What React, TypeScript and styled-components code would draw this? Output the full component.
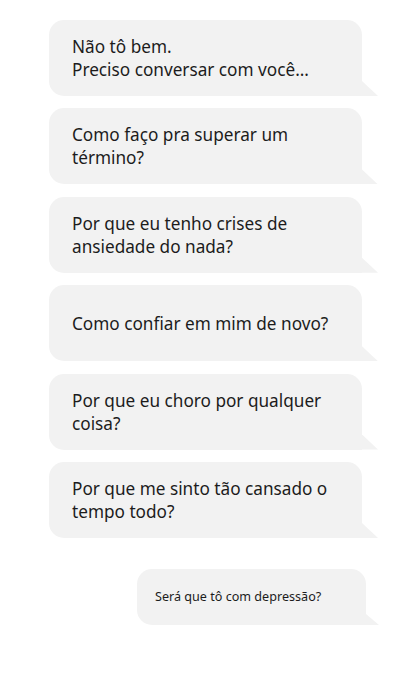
import React from "react";
import styled, {createGlobalStyle} from "styled-components";

const GlobalStyle = createGlobalStyle`
  html, body {
    margin: 0;
    padding: 0;
    background: #ffffff;
  }
  body {
    font-family: "Noto Sans", "Open Sans", sans-serif;
    color: #1c1c1c;
  }
`

/**
 * 대화 목록 레이아웃
 */
const ChatList = styled.div`
  width: 412px;
  height: 692px;
  box-sizing: border-box;
  padding: 20px 0 0 49px;
  display: flex;
  flex-direction: column;
  gap: 12.4px;
`

/**
 * 말풍선
 */
const Bubble = styled.div<{$small?: boolean}>`
  position: relative;
  box-sizing: border-box;
  width: ${props => props.$small ? '229px' : '313px'};
  min-height: ${props => props.$small ? '56px' : '76px'};
  margin-left: ${props => props.$small ? '88px' : '0'};
  margin-top: ${props => props.$small ? '18.6px' : '0'};
  padding: ${props => props.$small ? '8px 18px' : '15px 23px'};
  display: flex;
  align-items: center;
  background: #f2f2f2;
  border-radius: 15px 15px 0 15px;
  font-size: ${props => props.$small ? '12.6px' : '17.2px'};
  line-height: ${props => props.$small ? '18px' : '23px'};

  &::after {
    content: "";
    position: absolute;
    right: ${props => props.$small ? '-13px' : '-16px'};
    bottom: 0;
    width: ${props => props.$small ? '13px' : '16px'};
    height: ${props => props.$small ? '11px' : '15px'};
    background: #f2f2f2;
    clip-path: polygon(0 0, 100% 100%, 0 100%);
  }
`

const messages: string[][] = [
    ['Não tô bem.', 'Preciso conversar com você...'],
    ['Como faço pra superar um', 'término?'],
    ['Por que eu tenho crises de', 'ansiedade do nada?'],
    ['Como confiar em mim de novo?'],
    ['Por que eu choro por qualquer', 'coisa?'],
    ['Por que me sinto tão cansado o', 'tempo todo?'],
]

export default function App(): React.JSX.Element {
    return (
        <>
            <GlobalStyle/>
            <ChatList>
                {messages.map((lines, i) => (
                    <Bubble key={i}>
                        <div>
                            {lines.map((line, j) => (
                                <React.Fragment key={j}>
                                    {j > 0 && <br/>}
                                    {line}
                                </React.Fragment>
                            ))}
                        </div>
                    </Bubble>
                ))}
                <Bubble $small>Será que tô com depressão?</Bubble>
            </ChatList>
        </>
    )
}
